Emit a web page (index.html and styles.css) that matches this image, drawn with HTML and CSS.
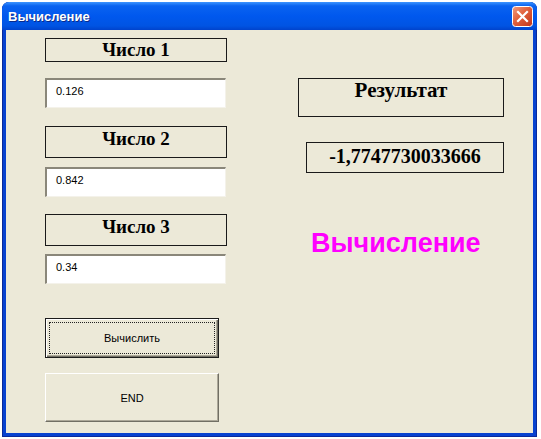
FILE: index.html
```html
<!DOCTYPE html>
<html lang="ru">

<head>
    <meta charset="UTF-8">
    <meta name="viewport" content="width=device-width, initial-scale=1.0">
    <title>Вычисление</title>
    <link rel="stylesheet" href="styles.css">
</head>

<body>

    <div class="window">
        <div class="titlebar">
            <span class="title">Вычисление</span>
            <button class="close" type="button" aria-label="Закрыть">
                <svg width="21" height="21" viewBox="0 0 21 21">
                    <defs>
                        <linearGradient id="red" x1="0" y1="0" x2="1" y2="1">
                            <stop offset="0" stop-color="#F29C7E" />
                            <stop offset="0.45" stop-color="#E0603C" />
                            <stop offset="1" stop-color="#C2351A" />
                        </linearGradient>
                    </defs>
                    <rect x="0.5" y="0.5" width="20" height="20" rx="3" fill="url(#red)" stroke="#ffffff" />
                    <path d="M6 6 L15 15 M15 6 L6 15" stroke="#ffffff" stroke-width="2.2" stroke-linecap="square" />
                </svg>
            </button>
        </div>

        <div class="client">
            <div class="col-left">
                <div class="caption first">Число 1</div>
                <div class="field gap-a">0.126</div>

                <div class="caption tall gap-b">Число 2</div>
                <div class="field gap-c">0.842</div>

                <div class="caption tall gap-d">Число 3</div>
                <div class="field gap-e">0.34</div>

                <button type="button" class="btn btn-default">Вычислить</button>
                <button type="button" class="btn btn-end">END</button>
            </div>

            <div class="col-right">
                <div class="result-title">Результат</div>
                <div class="result-value">-1,7747730033666</div>
                <div class="big-title">Вычисление</div>
            </div>
        </div>
    </div>

</body>

</html>
```

FILE: styles.css
```css
body {
    margin: 0;
    padding: 2px;
    background-color: #ffffff;
    font-family: "Liberation Sans", Arial, sans-serif;
}

.window {
    width: 535px;
    height: 435px;
    box-sizing: border-box;
    background-color: #0842d0;
    border-radius: 7px 7px 0 0;
    box-shadow: inset 0 0 0 1px #0a2a9a;
    display: flex;
    flex-direction: column;
}

.titlebar {
    height: 28px;
    flex: none;
    display: flex;
    align-items: center;
    justify-content: space-between;
    padding: 0 4px 0 6px;
    border-radius: 7px 7px 0 0;
    background: linear-gradient(#3d95ff 0%, #0a63f0 14%, #0058ee 50%, #0054e3 85%, #0043cc 100%);
}

.title {
    color: #ffffff;
    font-size: 13px;
    font-weight: bold;
    text-shadow: 1px 1px 0 #0a2a8a;
}

.close {
    width: 21px;
    height: 21px;
    padding: 0;
    margin: 0;
    border: none;
    background: none;
    display: block;
}

.close svg {
    display: block;
}

.client {
    flex: 1;
    margin: 0 4px 4px 4px;
    background-color: #ece9d8;
    display: flex;
    padding: 8px 0 0 39px;
}

.col-left {
    width: 182px;
    display: flex;
    flex-direction: column;
}

.caption {
    box-sizing: border-box;
    height: 24px;
    border: 1px solid #1a1a1a;
    text-align: center;
    font-family: "Liberation Serif", "Times New Roman", serif;
    font-weight: bold;
    font-size: 19px;
    line-height: 22px;
}

.caption.tall {
    height: 32px;
    padding-top: 1px;
}

.field {
    box-sizing: border-box;
    height: 30px;
    width: 181px;
    background-color: #ffffff;
    border-top: 2px solid #8a877a;
    border-left: 2px solid #8a877a;
    border-right: 1px solid #f4f2ea;
    border-bottom: 1px solid #f4f2ea;
    padding: 5px 0 0 9px;
    font-size: 11px;
    line-height: 13px;
    color: #000000;
}

.gap-a {
    margin-top: 16px;
}

.gap-b {
    margin-top: 18px;
}

.gap-c {
    margin-top: 9px;
}

.gap-d {
    margin-top: 17px;
}

.gap-e {
    margin-top: 8px;
}

.btn {
    box-sizing: border-box;
    width: 174px;
    background-color: #ece9d8;
    font-family: "Liberation Sans", Tahoma, sans-serif;
    font-size: 11px;
    color: #000000;
    padding: 0;
}

.btn-default {
    height: 40px;
    margin-top: 34px;
    border: 1px solid #1c1c1c;
    box-shadow: inset 1px 1px 0 #ffffff, inset -1px -1px 0 #716f64, inset -2px -2px 0 #aca899;
    outline: 1px dotted #222222;
    outline-offset: -5px;
}

.btn-end {
    height: 49px;
    margin-top: 15px;
    border-top: 1px solid #ffffff;
    border-left: 1px solid #ffffff;
    border-right: 1px solid #716f64;
    border-bottom: 1px solid #716f64;
    box-shadow: inset -1px -1px 0 #aca899;
}

.col-right {
    width: 206px;
    margin-left: 71px;
    padding-top: 40px;
    display: flex;
    flex-direction: column;
}

.result-title {
    box-sizing: border-box;
    height: 39px;
    border: 1px solid #1a1a1a;
    text-align: center;
    font-family: "Liberation Serif", "Times New Roman", serif;
    font-weight: bold;
    font-size: 21px;
    line-height: 22px;
}

.result-value {
    box-sizing: border-box;
    height: 31px;
    width: 198px;
    margin: 25px 0 0 8px;
    border: 1px solid #1a1a1a;
    text-align: center;
    font-family: "Liberation Serif", "Times New Roman", serif;
    font-weight: bold;
    font-size: 20px;
    line-height: 26px;
}

.big-title {
    margin: 55px 0 0 13px;
    color: #ff00ff;
    font-size: 27px;
    font-weight: bold;
    line-height: 30px;
}
```
